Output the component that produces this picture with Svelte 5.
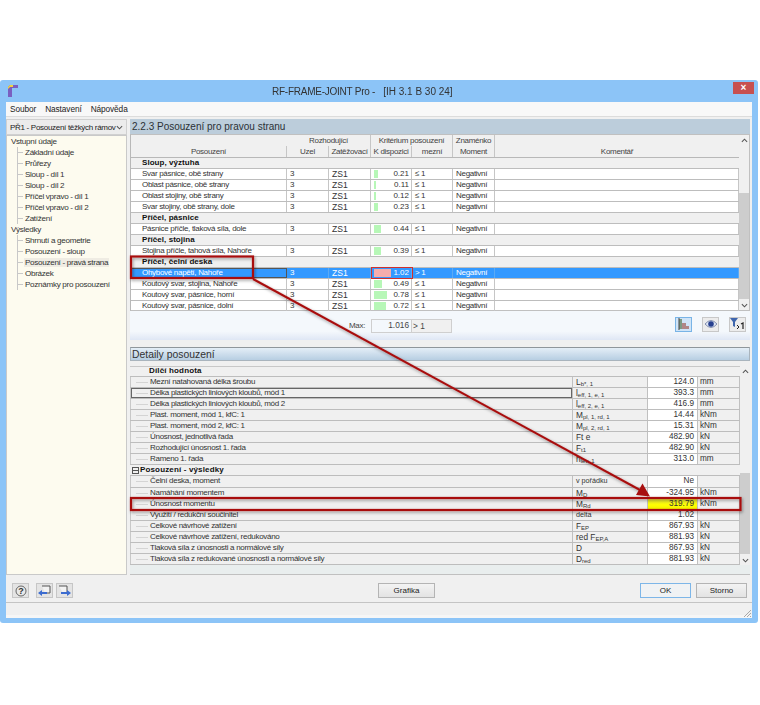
<script>
  const tree = [
    { t: 'Vstupní údaje', c: ['Základní údaje','Průřezy','Sloup - díl 1','Sloup - díl 2','Příčel vpravo - díl 1','Příčel vpravo - díl 2','Zatížení'] },
    { t: 'Výsledky', c: ['Shrnutí a geometrie','Posouzení - sloup','Posouzení - pravá strana','Obrázek','Poznámky pro posouzení'] }
  ];
  const rows = [
    { g: 'Sloup, výztuha' },
    { n: 'Svar pásnice, obě strany', v: 0.21 },
    { n: 'Oblast pásnice, obě strany', v: 0.11 },
    { n: 'Oblast stojiny, obě strany', v: 0.12 },
    { n: 'Svar stojiny, obě strany, dole', v: 0.23 },
    { g: 'Příčel, pásnice' },
    { n: 'Pásnice příčle, tlaková síla, dole', v: 0.44 },
    { g: 'Příčel, stojina' },
    { n: 'Stojina příčle, tahová síla, Nahoře', v: 0.39 },
    { g: 'Příčel, čelní deska' },
    { n: 'Ohybové napětí, Nahoře', v: 1.02, sel: true },
    { n: 'Koutový svar, stojina, Nahoře', v: 0.49 },
    { n: 'Koutový svar, pásnice, horní', v: 0.78 },
    { n: 'Koutový svar, pásnice, dolní', v: 0.72 }
  ];
  const details = [
    { g: 'Dílčí hodnota', sub: true },
    { n: 'Mezní natahovaná délka šroubu', s: 'L', b: 'b*, 1', v: '124.0', u: 'mm' },
    { n: 'Délka plastických liniových kloubů, mód 1', s: 'l', b: 'eff, 1, e, 1', v: '393.3', u: 'mm', focus: true },
    { n: 'Délka plastických liniových kloubů, mód 2', s: 'l', b: 'eff, 2, e, 1', v: '416.9', u: 'mm' },
    { n: 'Plast. moment, mód 1, kfC: 1', s: 'M', b: 'pl, 1, rd, 1', v: '14.44', u: 'kNm' },
    { n: 'Plast. moment, mód 2, kfC: 1', s: 'M', b: 'pl, 2, rd, 1', v: '15.31', u: 'kNm' },
    { n: 'Únosnost, jednotlivá řada', s: 'Ft e', b: '', v: '482.90', u: 'kN' },
    { n: 'Rozhodující únosnost 1. řada', s: 'F', b: 't1', v: '482.90', u: 'kN' },
    { n: 'Rameno 1. řada', s: 'h', b: 'lev, 1', v: '313.0', u: 'mm' },
    { g: 'Posouzení - výsledky', box: true },
    { n: 'Čelní deska, moment', s: 'v pořádku', b: '', small: true, v: 'Ne', u: '' },
    { n: 'Namáhání momentem', s: 'M', b: 'D', v: '-324.95', u: 'kNm' },
    { n: 'Únosnost momentu', s: 'M', b: 'Rd', v: '319.79', u: 'kNm', hi: true },
    { n: 'Využití / redukční součinitel', s: 'delta', b: '', small: true, v: '1.02', u: '' },
    { n: 'Celkové návrhové zatížení', s: 'F', b: 'EP', v: '867.93', u: 'kN' },
    { n: 'Celkové návrhové zatížení, redukováno', s: 'red F', b: 'EP,A', v: '881.93', u: 'kN' },
    { n: 'Tlaková síla z únosnosti a normálové síly', s: 'D', b: '', v: '867.93', u: 'kN' },
    { n: 'Tlaková síla z redukované únosnosti a normálové síly', s: 'D', b: 'red', v: '881.93', u: 'kN' }
  ];
</script>

<div class="page">
  <div class="window">
    <header class="titlebar">
      <svg class="logo" viewBox="0 0 11 13" width="11" height="13" aria-hidden="true">
        <path d="M1 13V3L3 1H11V4H5V13Z" fill="#7a5fc0" />
        <path d="M1 5V3L3 1H6V3H3Z" fill="#f2d23c" />
      </svg>
      <span class="title">RF-FRAME-JOINT Pro -</span>
      <span class="title-file">[IH 3.1 B 30 24]</span>
      <button class="close" aria-label="Zavřít">×</button>
    </header>
    <nav class="menu"><span>Soubor</span><span>Nastavení</span><span>Nápověda</span></nav>

    <div class="body">
      <aside class="left">
        <div class="combo"><span>PŘ1 - Posouzení těžkých rámov</span>
          <svg viewBox="0 0 8 5" width="7" height="5"><path d="M1 1L4 4L7 1" fill="none" stroke="#555" stroke-width="1.2"/></svg>
        </div>
        <div class="tree">
          {#each tree as node}
            <div class="root">{node.t}</div>
            <ul>
              {#each node.c as c}
                <li class:current={c === 'Posouzení - pravá strana'}><span>{c}</span></li>
              {/each}
            </ul>
          {/each}
        </div>
      </aside>

      <main class="right">
        <h1 class="sect">2.2.3 Posouzení pro pravou stranu</h1>
        <div class="tablewrap">
          <div class="table">
            <div class="thead">
              <div class="h h-a">Posouzení</div>
              <div class="h h-b">Rozhodující</div>
              <div class="h h-c">Uzel</div>
              <div class="h h-d">Zatěžovací</div>
              <div class="h h-e">Kritérium posouzení</div>
              <div class="h h-f">K dispozici</div>
              <div class="h h-g">mezní</div>
              <div class="h h-h">Znaménko</div>
              <div class="h h-i">Moment</div>
              <div class="h h-j">Komentář</div>
            </div>
            {#each rows as r}
              {#if r.g}
                <div class="group"><b>{r.g}</b></div>
              {:else}
                <div class="row" class:sel={r.sel}>
                  <div class="c first">{r.n}</div>
                  <div class="c">3</div>
                  <div class="c zs">ZS1</div>
                  <div class="c kd">
                    <i class="bar" class:over={r.v > 1} style="width:{r.v * 17}px"></i>
                    <span>{r.v.toFixed(2)}</span>
                  </div>
                  <div class="c">{r.v > 1 ? '> 1' : '≤ 1'}</div>
                  <div class="c">Negativní</div>
                  <div class="c"></div>
                </div>
              {/if}
            {/each}
          </div>
          <div class="scroll">
            <svg viewBox="0 0 8 5" width="7" height="5"><path d="M1 4L4 1L7 4" fill="none" stroke="#555" stroke-width="1.2"/></svg>
            <div class="track"><div class="thumb top-thumb"></div></div>
            <svg viewBox="0 0 8 5" width="7" height="5"><path d="M1 1L4 4L7 1" fill="none" stroke="#555" stroke-width="1.2"/></svg>
          </div>
        </div>

        <div class="maxbar">
          <span class="maxlabel">Max:</span>
          <span class="maxval">1.016</span>
          <span class="maxlim">&gt; 1</span>
          <div class="tools">
            <button class="tool active" aria-label="Graf">
              <svg viewBox="0 0 12 12" width="12" height="12"><path d="M1 1H4V5H8V8H11V11H1Z" fill="#7d9a84"/><path d="M4 5H8V8H11V11H4Z" fill="#b08686"/><path d="M1 0V12" stroke="#444"/></svg>
            </button>
            <button class="tool" aria-label="Zobrazit">
              <svg viewBox="0 0 12 10" width="12" height="10"><path d="M0 5Q6 -2 12 5Q6 12 0 5Z" fill="#dfe6f4" stroke="#5a6a94" stroke-width=".7"/><circle cx="6" cy="5" r="2.8" fill="#27408f"/></svg>
            </button>
            <button class="tool" aria-label="Filtr">
              <svg viewBox="0 0 15 12" width="15" height="12"><path d="M0 0H8L5 4V9L3 8V4Z" fill="#3f66ad"/><path d="M7 7L9 9L7 11" fill="none" stroke="#222"/><path d="M11 6L13 5V11" fill="none" stroke="#222" stroke-width="1.2"/></svg>
            </button>
          </div>
        </div>

        <h2 class="detail-head">Detaily posouzení</h2>

        <div class="detailwrap">
          <div class="dtable">
            {#each details as d}
              {#if d.g}
                <div class="dgroup" class:sub={d.sub}>
                  {#if d.box}<i class="plus"></i>{/if}
                  <b>{d.g}</b>
                </div>
              {:else}
                <div class="drow" class:hi={d.hi}>
                  <div class="dc name"><span class:focus={d.focus}>{d.n}</span></div>
                  <div class="dc sym" class:small={d.small}>{d.s}{#if d.b}<sub>{d.b}</sub>{/if}</div>
                  <div class="dc val">{d.v}</div>
                  <div class="dc unit">{d.u}</div>
                </div>
              {/if}
            {/each}
          </div>
          <div class="scroll dscroll">
            <svg viewBox="0 0 8 5" width="7" height="5"><path d="M1 4L4 1L7 4" fill="none" stroke="#555" stroke-width="1.2"/></svg>
            <div class="track"><div class="thumb d-thumb"></div></div>
            <svg viewBox="0 0 8 5" width="7" height="5"><path d="M1 1L4 4L7 1" fill="none" stroke="#555" stroke-width="1.2"/></svg>
          </div>
        </div>
        <div class="strip"></div>
      </main>
    </div>

    <footer class="foot">
      <div class="foot-left">
        <button class="ibtn first-i" aria-label="Nápověda">
          <svg viewBox="0 0 12 12" width="12" height="12"><circle cx="6" cy="6" r="5" fill="#e8e8e8" stroke="#666"/><text x="6" y="9" text-anchor="middle" class="q">?</text></svg>
        </button>
        <button class="ibtn" aria-label="Zpět">
          <svg viewBox="0 0 13 12" width="13" height="12"><path d="M4 1H12V8H7" fill="#f3f3f3" stroke="#555"/><path d="M0 8L4 5V7H9V9H4V11Z" fill="#3c6cd0"/></svg>
        </button>
        <button class="ibtn" aria-label="Další">
          <svg viewBox="0 0 13 12" width="13" height="12"><path d="M1 1H9V8H5" fill="#f3f3f3" stroke="#555"/><path d="M13 8L9 5V7H3V9H9V11Z" fill="#3c6cd0"/></svg>
        </button>
      </div>
      <button class="btn grafika">Grafika</button>
      <div class="foot-right">
        <button class="btn ok">OK</button>
        <button class="btn">Storno</button>
      </div>
    </footer>
    <div class="status">
      <svg class="grip" viewBox="0 0 10 10" width="10" height="10"><path d="M9 2L2 9M9 5L5 9M9 8L8 9" stroke="#a8a8a8" stroke-width="1"/></svg>
    </div>
  </div>

  <svg class="annot" viewBox="0 0 760 705" width="760" height="705" aria-hidden="true">
    <defs>
      <filter id="sh" x="-5%" y="-20%" width="110%" height="150%"><feDropShadow dx="1" dy="1.5" stdDeviation="1.5" flood-color="#000" flood-opacity=".4"/></filter>
    </defs>
    <g fill="none" stroke="#a80f0f" filter="url(#sh)">
      <rect x="131" y="256.5" width="122" height="21.5" stroke-width="2.2"/>
      <rect x="131" y="498" width="609.5" height="12" stroke-width="2.2"/>
      <path d="M253 279L640 490" stroke-width="2"/>
    </g>
    <rect x="371.5" y="267.5" width="41" height="11" fill="none" stroke="#d0302c" stroke-width="1"/>
    <path d="M650 496.5L636 495L642.5 483.5Z" fill="#a80f0f"/>
  </svg>
</div>

<style>
  :global(body) { margin: 0; background: #fff; }
  .page {
    position: relative;
    width: 760px;
    height: 705px;
    padding-top: 80px;
    box-sizing: border-box;
    font: 8px "Liberation Sans", Arial, sans-serif;
    letter-spacing: -.3px;
    color: #222;
    overflow: hidden;
    filter: blur(.3px);
  }
  b { letter-spacing: .05px; }
  .window {
    width: 758px;
    height: 543px;
    box-sizing: border-box;
    background: #8cc4f7;
    border-radius: 3px;
    padding: 0 6px 5px;
    display: flex;
    flex-direction: column;
  }
  .titlebar { height: 22px; flex: none; display: flex; align-items: center; position: relative; letter-spacing: 0; }
  .logo { position: absolute; left: 1px; top: 4px; }
  .title { margin-left: 266px; font-size: 10px; letter-spacing: -.25px; color: #333; }
  .title-file { margin-left: 8px; font-size: 10px; color: #333; }
  .close {
    position: absolute; right: -2px; top: 2px; width: 21px; height: 12px;
    background: #c75050; color: #fff; border: 0; padding: 0;
    font: bold 10px/12px "Liberation Sans", sans-serif;
  }
  .menu {
    height: 15px; flex: none; background: #f8f8f8; display: flex; gap: 9px; align-items: center;
    padding-left: 4px; border-bottom: 1px solid #dcdcdc; box-sizing: border-box;
    font-size: 8.3px; letter-spacing: -.1px;
  }
  .body { height: 458px; flex: none; background: #f0f0f0; display: flex; gap: 3px; box-sizing: border-box; }
  .left { width: 121px; flex: none; display: flex; flex-direction: column; }
  .combo {
    height: 16px; flex: none; margin-top: 2px; background: #ececec; border: 1px solid #d0d0d0; box-sizing: border-box;
    display: flex; align-items: center; justify-content: space-between; padding: 0 3px; font-size: 8px; white-space: nowrap;
  }
  .tree {
    flex: 1; background: #fdfbef; border: 1px solid #c9c9c9; box-sizing: border-box;
    font-size: 8.1px; color: #333;
  }
  .root { height: 11px; line-height: 11px; padding-left: 4px; }
  .tree ul { list-style: none; margin: 0 0 0 10px; padding: 0; border-left: 1px solid #c8c8c8; }
  .tree li { height: 11px; line-height: 11px; padding-left: 6px; position: relative; white-space: nowrap; }
  .tree li::before { content: ""; position: absolute; left: 0; top: 5px; width: 5px; border-top: 1px solid #c8c8c8; }
  .tree li span { padding: 0 1px; }
  .tree li.current span { background: #efece3; }

  .right { flex: 1; min-width: 0; display: flex; flex-direction: column; margin-right: 2px; padding-top: 2px; }
  .sect {
    margin: 0; height: 15px; flex: none; line-height: 15px; background: #bccddb; font-weight: 400; font-size: 10px; color: #2b3136;
    padding-left: 2px; letter-spacing: 0;
  }
  .tablewrap { display: flex; flex: none; background: #f0f0f0; height: 177px; border: 1px solid #c0c0c0; border-left: 1px solid #b8b8b8; box-sizing: border-box; }
  .table { width: 608px; flex: none; background: #fff; }
  .thead {
    height: 22px; display: grid; background: #f0f0f0; border-bottom: 1px solid #b8b8b8;
    grid-template-columns: 156px 42px 42px 41px 41px 42px 1fr;
    grid-template-rows: 11px 11px;
    font-size: 8px; color: #444;
  }
  .h { text-align: center; line-height: 11px; border-right: 1px solid #c6c6c6; white-space: nowrap; }
  .h-a { grid-area: 2 / 1; } 
  .h-b { grid-area: 1 / 2 / 2 / 4; }
  .h-c { grid-area: 2 / 2; }
  .h-d { grid-area: 2 / 3; }
  .h-e { grid-area: 1 / 4 / 2 / 6; }
  .h-f { grid-area: 2 / 4; }
  .h-g { grid-area: 2 / 5; }
  .h-h { grid-area: 1 / 6; }
  .h-i { grid-area: 2 / 6; }
  .h-j { grid-area: 2 / 7; border-right: 0; }
  .group {
    height: 11px; box-sizing: border-box; background: #f0f0f0; border-bottom: 1px solid #bdbdbd;
    line-height: 10px; padding-left: 11px; font-size: 8px; color: #111;
  }
  .row {
    height: 11px; box-sizing: border-box; display: grid; border-bottom: 1px solid #bdbdbd;
    grid-template-columns: 156px 42px 42px 41px 41px 42px 1fr; line-height: 10px; color: #333;
  }
  .c { border-right: 1px solid #c6c6c6; padding-left: 3px; white-space: nowrap; overflow: hidden; position: relative; font-size: 8px; }
  .c.first { padding-left: 11px; }
  .c.zs { font-size: 8.6px; letter-spacing: 0; }
  .c.kd { padding: 0 2px 0 3px; text-align: right; letter-spacing: 0; }
  .kd span { position: relative; }
  .bar { position: absolute; left: 3px; top: 1px; height: 8px; background: #b7f7b7; }
  .bar.over { background: #f5adad; }
  .row.sel { background: #3399ff; color: #fff; }
  .row.sel .c { border-right-color: #5aaaf5; }
  .row.sel .c.first { outline: 1px solid #555; outline-offset: -1px; }
  .scroll { flex: 1; display: flex; flex-direction: column; align-items: center; background: #f0f0f0; padding-top: 3px; gap: 2px; }
  .track { flex: 1; width: 100%; position: relative; }
  .thumb { position: absolute; left: 0; right: 0; background: #cdcdcd; }
  .top-thumb { top: 48px; bottom: 2px; }
  .scroll svg:last-child { margin-bottom: 2px; }

  .maxbar {
    height: 29px; flex: none; display: flex; align-items: center; position: relative; padding-left: 219px;
    background: linear-gradient(#f4f8fc 70%, #dfe7f5);
    color: #444;
  }
  .maxlabel { width: 22px; }
  .maxval { width: 37px; height: 12px; line-height: 11px; border: 1px solid #cfcfcf; border-right: 0; text-align: right; padding-right: 2px; font-size: 8.3px; letter-spacing: 0; }
  .maxlim { width: 38px; height: 12px; line-height: 12px; border: 1px solid #cfcfcf; padding-left: 1px; font-size: 8.3px; background: #f0f0f0; letter-spacing: 0; }
  .tools { margin-left: auto; display: flex; gap: 10px; margin-right: 4px; margin-top: -3px; }
  .tool { width: 17px; height: 15px; padding: 0; border: 1px solid #c8c8c8; background: #ececec; display: flex; align-items: center; justify-content: center; }
  .tool.active { background: #cfe4f7; border-color: #79b4e6; }

  .detail-head {
    margin: 7px 0 5px; height: 14px; flex: none; line-height: 13px; font-weight: 400; font-size: 10.4px; color: #333; letter-spacing: 0;
    background: linear-gradient(#e4eef7, #b7cee2); border: 1px solid #a9b4bd; border-top-color: #8f969b; box-sizing: border-box; padding-left: 1px;
  }
  .detailwrap { display: flex; flex: none; height: 199px; background: #e9eeee; }
  .dtable { width: 610px; flex: none; }
  .drow {
    height: 11.05px; box-sizing: border-box; display: grid; grid-template-columns: 443px 75px 50px 42px; background: #f0f0f0;
    border-bottom: 1px solid #bdbdbd; line-height: 10px; color: #333;
  }
  .dgroup {
    height: 11.05px; box-sizing: border-box; background: #f0f0f0; border-bottom: 1px solid #bdbdbd; line-height: 10px;
    display: flex; align-items: center; font-size: 8px; color: #111; padding-left: 2px; gap: 1px;
  }
  .dgroup b { letter-spacing: .15px; }
  .dgroup.sub { padding-left: 19px; box-shadow: inset 0 1px 0 #c8c8c8; }
  .plus { width: 5px; height: 5px; border: 1px solid #555; background: linear-gradient(#555, #555) center / 5px 1px no-repeat; flex: none; }
  .dc { border-right: 1px solid #c0c0c0; white-space: nowrap; overflow: hidden; padding-left: 2px; font-size: 8px; }
  .dc.name { padding-left: 19px; position: relative; border-left: 1px solid #c8c8c8; }
  .dc.name::before { content: ""; position: absolute; left: 5px; top: 5px; width: 12px; border-top: 1px solid #d4d4d4; }
  .dc.name span.focus::after { content: ""; position: absolute; inset: 0; border: 1px solid #666; }
  .dc.sym { font-size: 8.3px; padding-left: 3px; letter-spacing: 0; }
  .dc.sym.small { font-size: 7.2px; }
  .dc.sym sub { font-size: 6px; vertical-align: -1px; line-height: 0; }
  .dc.val { background: #fff; text-align: right; padding: 0 3px 0 0; font-size: 8.2px; letter-spacing: 0; }
  .dc.unit { font-size: 8.2px; padding-left: 2px; letter-spacing: 0; }
  .drow.hi .val { background: linear-gradient(#e8e83a, #ffff00 60%, #f4f400); }
  .d-thumb { top: 97px; bottom: 2px; }
  .strip { flex: 1; background: #e9eeee; border-bottom: 1px solid #c0c0c0; }

  .foot {
    height: 27px; flex: none; background: #f0f0f0; display: flex; align-items: center; padding: 4px 0 0 6px; box-sizing: border-box;
  }
  .foot-left { display: flex; gap: 3px; }
  .first-i { margin-right: 4px; }
  .ibtn { width: 17px; height: 15px; padding: 0; border: 1px solid #c6c6c6; background: #e4e4e4; display: flex; align-items: center; justify-content: center; }
  .q { font: bold 9px "Liberation Sans", sans-serif; fill: #333; }
  .btn {
    height: 15px; width: 51px; padding: 0; border: 1px solid #b4b4b4; background: linear-gradient(#f3f3f3, #e3e3e3);
    font: 8px "Liberation Sans", sans-serif; color: #222;
  }
  .grafika { width: 57px; margin-left: 305px; }
  .foot-right { margin-left: auto; display: flex; gap: 5px; margin-right: 5px; }
  .ok { border-color: #7db6e8; background: #f0f2f4; }
  .status { height: 16px; flex: none; position: relative; background: #f0f0f0; border-top: 1px solid #c4c4c4; box-sizing: border-box; box-shadow: inset 0 -3px 0 #f6f6f6; }
  .grip { position: absolute; right: 0; bottom: 0; }
  .annot { position: absolute; left: 0; top: 0; pointer-events: none; }
</style>
